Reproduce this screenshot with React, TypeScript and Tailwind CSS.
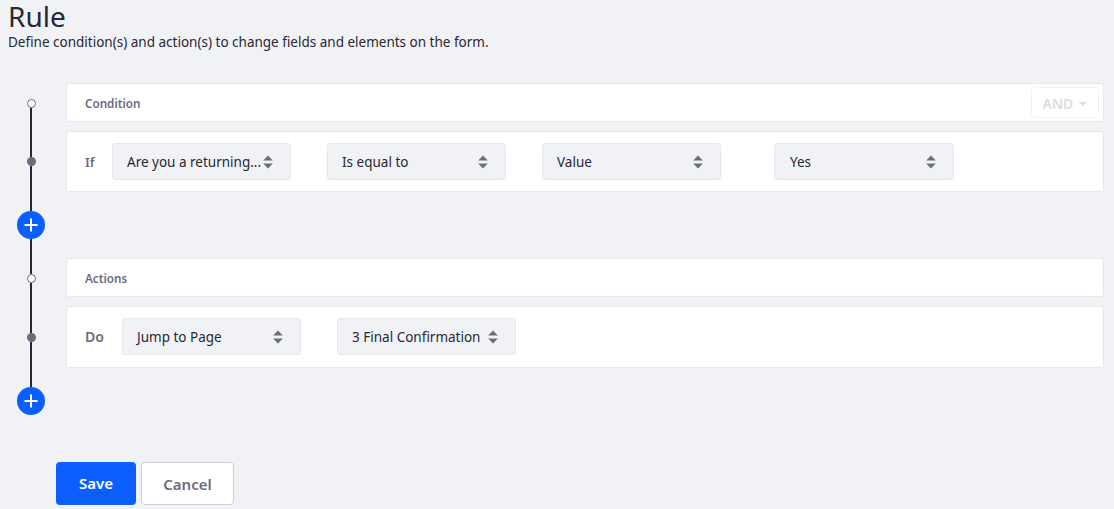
const font = { fontFamily: '"Noto Sans", sans-serif' };
const line = 'w-[2px] bg-[#272833]';

function Arrows() {
  return (
    <svg width="10" height="14" viewBox="0 0 10 14" className="shrink-0 text-[#6b6c7e]" fill="currentColor">
      <path d="M5 0.5 L9.8 5.5 H0.2 Z" />
      <path d="M5 13.5 L9.8 8.5 H0.2 Z" />
    </svg>
  );
}

function Select({ label, className = '' }: { label: string; className?: string }) {
  return (
    <div
      className={`flex h-[37px] w-[179px] items-center justify-between rounded-[3px] border border-[#e7e7ed] bg-[#f1f2f5] pl-[14px] pr-[17px] text-[13.5px] text-[#272833] ${className}`}
    >
      <span className="whitespace-nowrap pt-[2px]">{label}</span>
      <Arrows />
    </div>
  );
}

function Rail({ last = false }: { last?: boolean }) {
  return (
    <div className="flex w-[62px] shrink-0 flex-col items-center">
      {last ? <div className={`h-[16px] ${line}`} /> : <div className="h-[16px]" />}
      <div className="h-[9px] w-[9px] rounded-full border border-[#6b6c7e] bg-white" />
      <div className={`${last ? 'h-[50px]' : 'h-[49px]'} ${line}`} />
      <div className="h-[9px] w-[9px] rounded-full bg-[#6b6c7e]" />
      <div className={`h-[45px] ${line}`} />
      <button className="flex h-7 w-7 shrink-0 items-center justify-center rounded-full bg-[#0b5fff]">
        <svg width="16" height="16" viewBox="0 0 16 16" fill="none" stroke="white" strokeWidth="2">
          <path d="M8 1.5 V14.5 M1.5 8 H14.5" />
        </svg>
      </button>
      {!last && <div className={`h-[19px] ${line}`} />}
    </div>
  );
}

function Section({
  title,
  action,
  last = false,
  children,
}: {
  title: string;
  action?: React.ReactNode;
  last?: boolean;
  children: React.ReactNode;
}) {
  return (
    <section className="flex">
      <Rail last={last} />
      <div className="ml-[4px] flex w-[1038px] flex-col gap-[9px]">
        <div className="flex h-[39px] items-center justify-between rounded-[3px] border border-[#e7e7ed] bg-white pl-[18px] pr-[4px]">
          <span className="pt-[2px] text-[11.7px] font-semibold text-[#6b6c7e]">{title}</span>
          {action}
        </div>
        <div
          className={`flex items-center rounded-[3px] border border-[#e7e7ed] bg-white pl-[18px] ${last ? 'h-[62px] pb-px' : 'h-[61px]'}`}
        >
          {children}
        </div>
      </div>
    </section>
  );
}

export default function App() {
  return (
    <div className="h-[509px] w-[1114px] overflow-hidden bg-[#f1f2f5]" style={font}>
      <header className="pl-2">
        <h1 className="text-[28px] leading-[33px] text-[#272833]">Rule</h1>
        <p className="text-[13.5px] leading-[18px] text-[#272833]">
          Define condition(s) and action(s) to change fields and elements on the form.
        </p>
      </header>

      <div className="mt-[32px] flex flex-col">
        <Section
          title="Condition"
          action={
            <div className="flex h-[31px] w-[68px] items-center justify-center gap-[6px] rounded-[4px] border border-[#f1f2f5] pt-[2px] text-sm font-semibold text-[#dcdce2]">
              AND
              <svg width="8" height="4" viewBox="0 0 8 4" fill="currentColor">
                <path d="M0 0 H8 L4 4 Z" />
              </svg>
            </div>
          }
        >
          <span className="w-[27px] pt-[2px] text-[13px] font-semibold text-[#6b6c7e]">If</span>
          <Select label="Are you a returning..." />
          <Select label="Is equal to" className="ml-[36px]" />
          <Select label="Value" className="ml-[36px]" />
          <Select label="Yes" className="ml-[53px] w-[180px] pl-[15px]" />
        </Section>

        <Section title="Actions" last>
          <span className="w-[37px] text-sm font-semibold text-[#6b6c7e]">Do</span>
          <Select label="Jump to Page" />
          <Select label="3 Final Confirmation" className="ml-[36px]" />
        </Section>
      </div>

      <div className="ml-[56px] mt-[47px] flex gap-[5px]">
        <button className="h-[43px] w-[80px] rounded-[4px] bg-[#0b5fff] text-[15px] font-semibold text-white">Save</button>
        <button className="h-[43px] w-[93px] rounded-[4px] border border-[#cdced9] bg-white pt-px text-[15px] font-semibold text-[#6b6c7e]">
          Cancel
        </button>
      </div>
    </div>
  );
}
